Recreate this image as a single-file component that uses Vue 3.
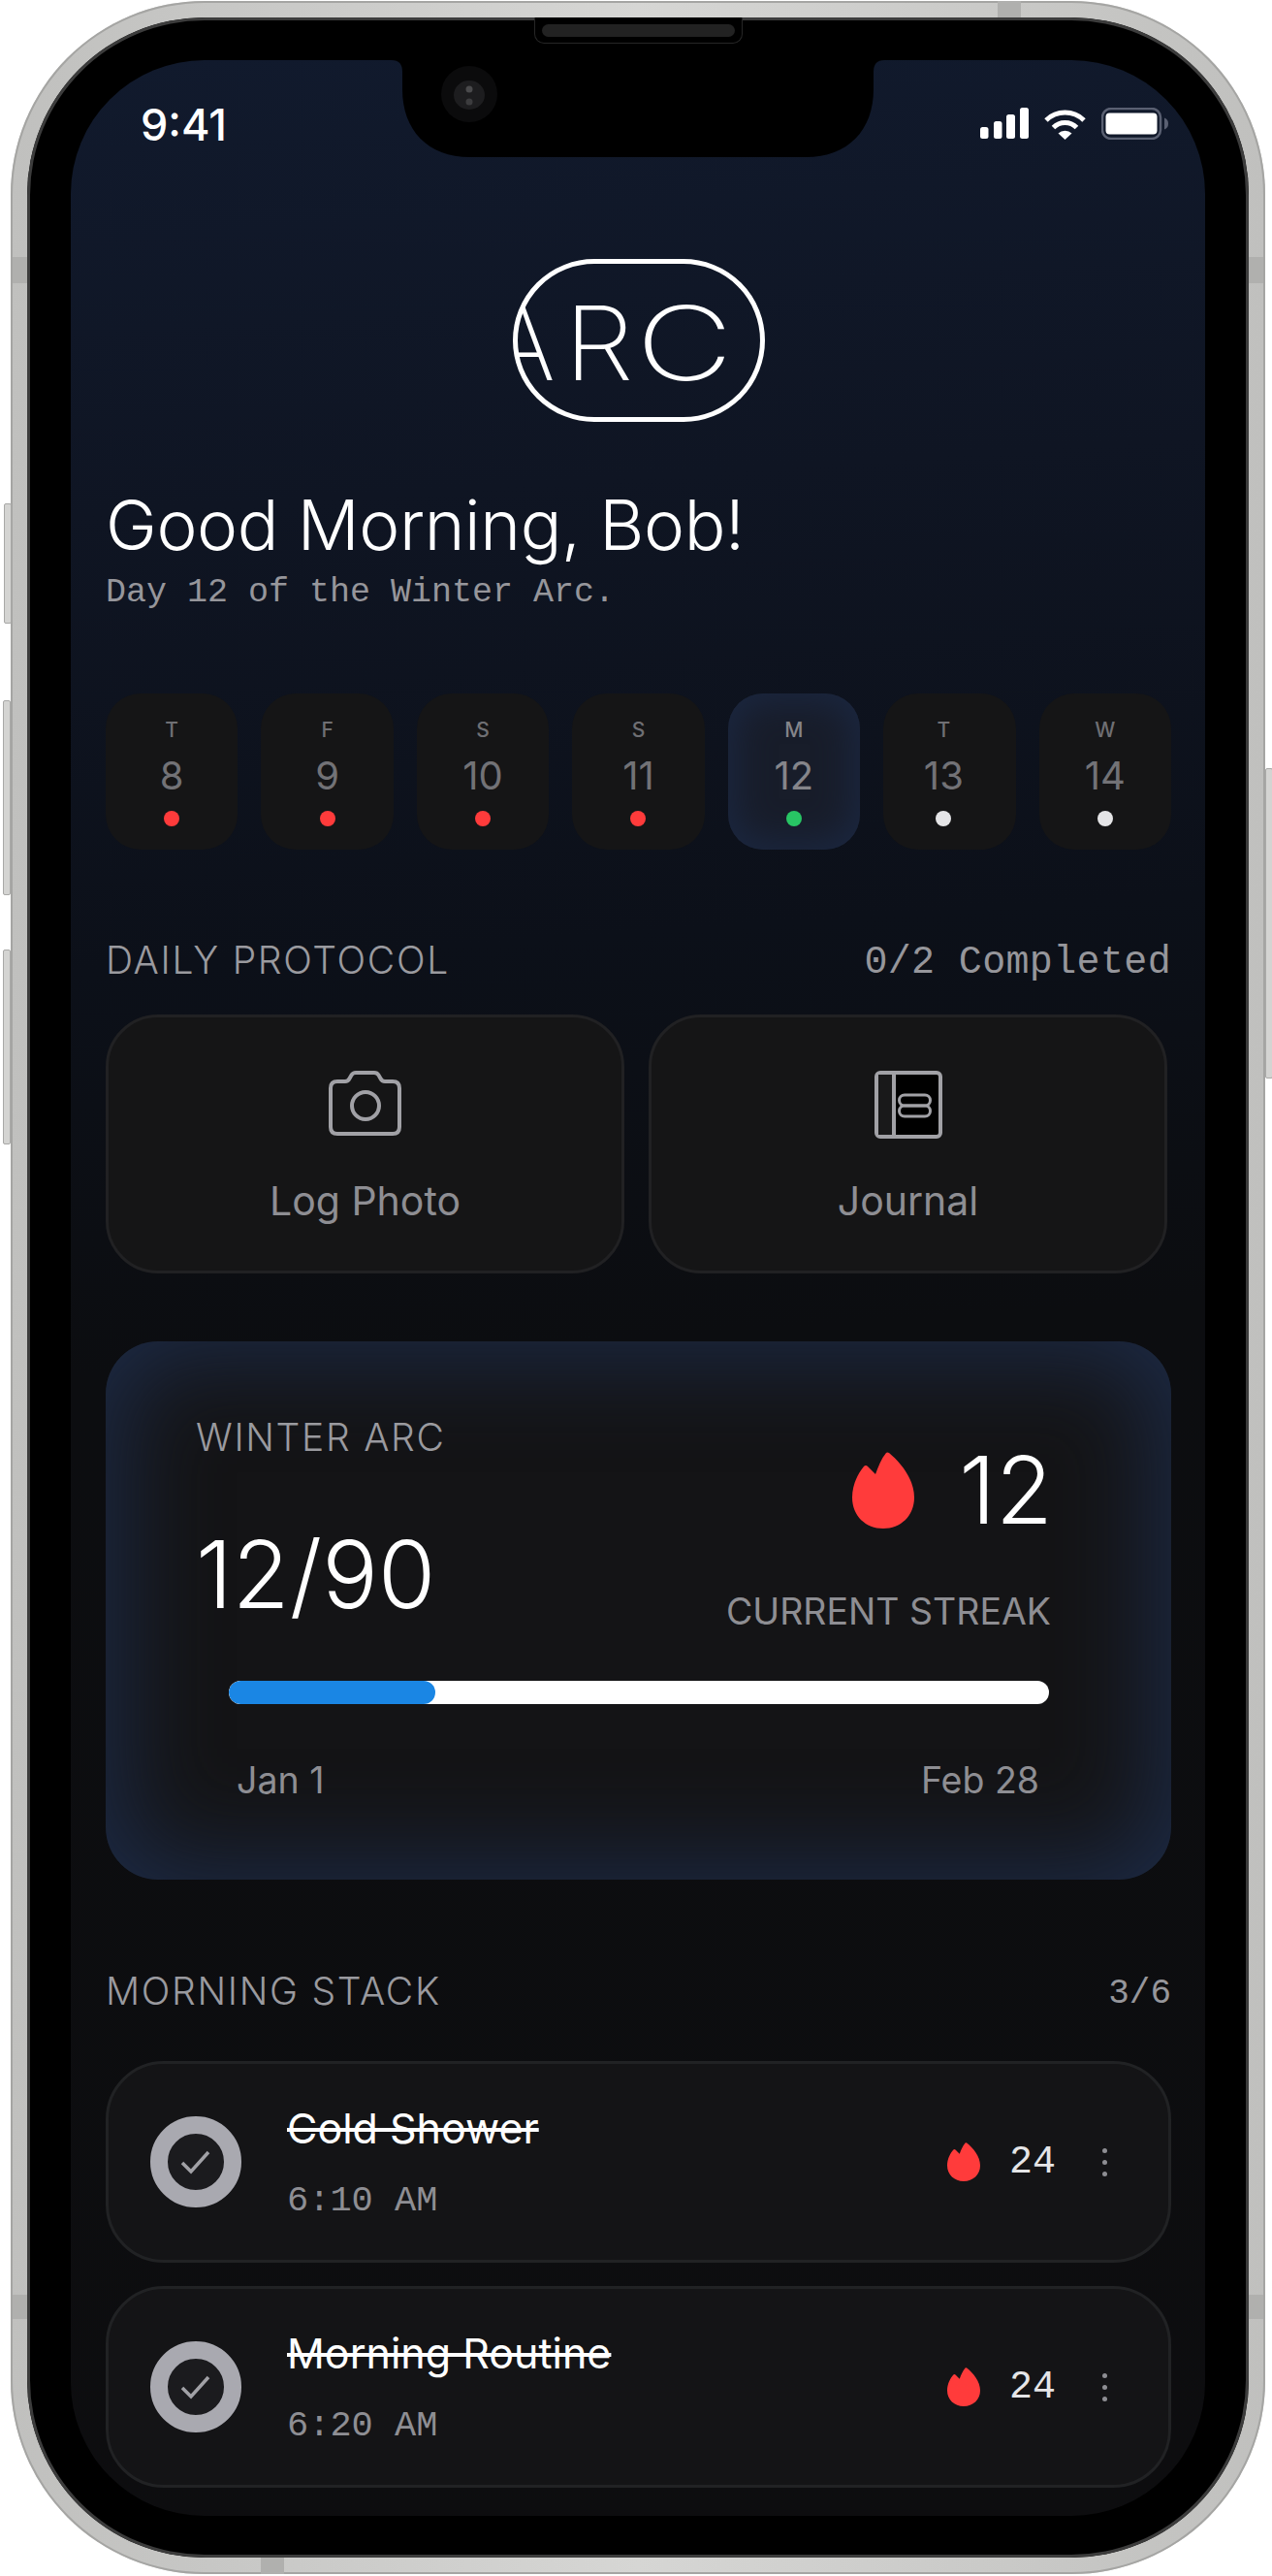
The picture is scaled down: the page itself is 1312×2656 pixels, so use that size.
<script setup>
const days = [
  { l: 'T', n: 8, s: 'miss' },
  { l: 'F', n: 9, s: 'miss' },
  { l: 'S', n: 10, s: 'miss' },
  { l: 'S', n: 11, s: 'miss' },
  { l: 'M', n: 12, s: 'now' },
  { l: 'T', n: 13, s: 'next off' },
  { l: 'W', n: 14, s: 'next' }
]
const tasks = [
  { t: 'Cold Shower', h: '6:10 AM', c: 24 },
  { t: 'Morning Routine', h: '6:20 AM', c: 24 }
]
const flame = 'M35 1Q36 0 38 1C50 11 64 28 64 47C64 66 50 79 32 79C14 79 0 66 0 47C0 34 6 22 12 15Q14 13 16 15L24 23C27 15 30 7 35 1Z'
</script>

<template>
  <div class="page">
    <div class="device">
      <i class="btn b1"></i><i class="btn b2"></i><i class="btn b3"></i><i class="btn b4"></i>
      <i class="ant a1"></i><i class="ant a2"></i><i class="ant a3"></i><i class="ant a4"></i><i class="ant a5"></i><i class="ant a6"></i>
      <div class="bezel">
        <div class="speaker"><span class="mesh"></span></div>
        <div class="screen">
          <svg class="notch" width="1170" height="100" viewBox="0 0 1170 100">
            <path d="M331 0Q342 0 342 12V30C342 72 368 100 412 100H758C802 100 828 72 828 30V12Q828 0 839 0Z" fill="#000" />
            <circle cx="411" cy="35" r="29" fill="#0b0b0c" />
            <ellipse cx="411" cy="36" rx="16" ry="15" fill="#1d1d1f" />
            <circle cx="411" cy="30" r="3.5" fill="#4a4a4c" />
            <circle cx="411" cy="43" r="3.5" fill="#3c3c3e" />
          </svg>

          <div class="status">
            <span class="clock">9:41</span>
            <div class="status-icons">
              <svg width="50" height="32" viewBox="0 0 50 32" fill="#fff">
                <rect x="0" y="20" width="8.5" height="12" rx="2.5" />
                <rect x="14" y="14" width="8.5" height="18" rx="2.5" />
                <rect x="27" y="7" width="9" height="25" rx="2.5" />
                <rect x="41" y="0" width="9" height="32" rx="2.5" />
              </svg>
              <svg width="45" height="33" viewBox="0 0 45 33" fill="none" stroke="#fff" stroke-width="5">
                <path d="M3 13A28 28 0 0 1 42 13" />
                <path d="M10.500 20.500A17 17 0 0 1 34.500 20.500" />
                <path d="M22.500 33L15.500 26.500A10 10 0 0 1 29.500 26.500Z" fill="#fff" stroke="none" />
              </svg>
              <svg width="69" height="33" viewBox="0 0 69 33">
                <rect x="1" y="1" width="60" height="31" rx="9" fill="none" stroke="#5a6072" stroke-width="2.500" />
                <rect x="4.500" y="5.500" width="53" height="22" rx="4" fill="#fff" />
                <path d="M65 10.500Q69 12 69 16.500Q69 21 65 22.500Z" fill="#5a6072" />
              </svg>
            </div>
          </div>

          <div class="content">
            <svg class="logo" width="260" height="168" viewBox="0 0 260 168">
              <defs>
                <clipPath id="pill"><rect x="2" y="2" width="256" height="164" rx="82" /></clipPath>
              </defs>
              <g clip-path="url(#pill)" class="logo-text">
                <text x="9" y="125" text-anchor="middle">A</text>
                <text transform="translate(53 125) scale(1.08 1)">R</text>
                <text transform="translate(127 125) scale(1.3 1)">C</text>
              </g>
              <rect x="2.500" y="2.500" width="255" height="163" rx="81.500" fill="none" stroke="#fff" stroke-width="5" />
            </svg>

            <h1 class="hello">Good Morning, Bob!</h1>
            <p class="sub mono">Day 12 of the Winter Arc.</p>

            <div class="days">
              <div v-for="d in days" :key="d.n" class="day" :class="d.s">
                <span class="d-l">{{ d.l }}</span>
                <span class="d-n">{{ d.n }}</span>
                <i class="d-dot"></i>
              </div>
            </div>

            <div class="head protocol">
              <span class="label">DAILY PROTOCOL</span>
              <span class="count mono">0/2 Completed</span>
            </div>

            <div class="actions">
              <div class="action">
                <div class="a-icon">
                  <svg width="75" height="67" viewBox="0 0 75 67" fill="none" stroke="#a1a1a6" stroke-width="4">
                    <path d="M9 11H17Q20 11 21.500 8L23.500 4.500Q25 2 28 2H47Q50 2 51.500 4.500L53.500 8Q55 11 58 11H66Q73 11 73 18V58Q73 65 66 65H9Q2 65 2 58V18Q2 11 9 11Z" />
                    <circle cx="38" cy="36" r="14" />
                  </svg>
                </div>
                <span class="a-text">Log Photo</span>
              </div>
              <div class="action">
                <div class="a-icon">
                  <svg width="70" height="70" viewBox="0 0 70 70">
                    <rect x="2" y="2" width="66" height="66" rx="4" fill="#000" stroke="#a1a1a6" stroke-width="4" />
                    <rect x="4" y="4" width="16" height="62" fill="#19191a" />
                    <path d="M20 2V68" stroke="#a1a1a6" stroke-width="4" />
                    <rect x="25.500" y="25" width="32" height="11" rx="5.500" fill="none" stroke="#a1a1a6" stroke-width="3" />
                    <rect x="25.500" y="36" width="32" height="11" rx="5.500" fill="none" stroke="#a1a1a6" stroke-width="3" />
                  </svg>
                </div>
                <span class="a-text">Journal</span>
              </div>
            </div>

            <section class="arc">
              <div class="arc-top">
                <div>
                  <div class="label">WINTER ARC</div>
                  <div class="big arc-count">12/90</div>
                </div>
                <div class="arc-right">
                  <div class="streak">
                    <svg width="64" height="79" viewBox="0 0 64 79"><path :d="flame" fill="#ff3b3b" /></svg>
                    <span class="big">12</span>
                  </div>
                  <div class="streak-label">CURRENT STREAK</div>
                </div>
              </div>
              <div class="bar"><div class="fill"></div></div>
              <div class="dates"><span>Jan 1</span><span>Feb 28</span></div>
            </section>

            <div class="head stack">
              <span class="label">MORNING STACK</span>
              <span class="count small mono">3/6</span>
            </div>

            <div class="tasks">
              <div v-for="t in tasks" :key="t.t" class="task">
                <div class="ring">
                  <svg width="58" height="58" viewBox="0 0 58 58" fill="none"><path d="M15 30L24 39L42 19" stroke="#a1a1a6" stroke-width="3.500" /></svg>
                </div>
                <div class="t-body">
                  <div class="t-title">{{ t.t }}</div>
                  <div class="t-time mono">{{ t.h }}</div>
                </div>
                <svg class="t-flame" width="34" height="40" viewBox="0 0 64 79" preserveAspectRatio="none"><path :d="flame" fill="#ff3b3b" /></svg>
                <span class="t-count mono">{{ t.c }}</span>
                <div class="t-more"><i></i><i></i><i></i></div>
              </div>
            </div>
          </div>
        </div>
      </div>
    </div>
  </div>
</template>

<style>
html, body { margin: 0; background: #fff; }
</style>

<style scoped>
.page { width: 1312px; height: 2656px; overflow: hidden; background: #fff; padding: 1px 0 0 11px; box-sizing: border-box; font-family: Inter, "Liberation Sans", sans-serif; }
.mono { font-family: "Liberation Mono", monospace; }
.device { position: relative; width: 1294px; height: 2653px; border-radius: 200px; background: linear-gradient(90deg, #c0c0be, #d6d6d4 50%, #c0c0be); box-shadow: inset 0 0 0 2px #a5a5a3; padding: 17px; box-sizing: border-box; }
.btn { position: absolute; width: 8px; background: #d4d4d2; border: 1px solid #a9a9a7; border-radius: 2px; box-sizing: border-box; }
.b1 { left: -7px; top: 518px; height: 124px; }
.b2 { left: -8px; top: 721px; height: 201px; }
.b3 { left: -8px; top: 978px; height: 201px; }
.b4 { left: 1294px; top: 791px; height: 320px; }
.ant { position: absolute; background: #b0b0ae; }
.a1 { left: 2px; top: 264px; width: 15px; height: 27px; }
.a2 { left: 1277px; top: 264px; width: 15px; height: 27px; }
.a3 { left: 1018px; top: 0; width: 24px; height: 17px; }
.a4 { left: 258px; top: 2636px; width: 24px; height: 17px; }
.a5 { left: 1277px; top: 2365px; width: 15px; height: 25px; }
.a6 { left: 2px; top: 2365px; width: 15px; height: 25px; }
.bezel { position: relative; width: 1260px; height: 2619px; border-radius: 183px; background: #000; box-shadow: inset 0 0 0 3px #3c3c3c; padding: 44px 0 0 45px; box-sizing: border-box; }
.speaker { position: absolute; left: 523px; top: 0; width: 215px; height: 27px; background: #000; border: 1px solid #262626; border-top: 0; border-radius: 0 0 10px 10px; box-sizing: border-box; padding: 7px 7px 0; }
.mesh { display: block; height: 13px; border-radius: 7px; background: #222; }
.screen { position: relative; width: 1170px; height: 2532px; border-radius: 138px; overflow: hidden; background: linear-gradient(176deg, #111a2d 0, #0f1523 18%, #0c1019 36%, #0c0d10 52%, #0d0d0f 100%); }
.notch { position: absolute; left: 0; top: 0; }
.status { height: 130px; display: flex; align-items: center; justify-content: space-between; padding: 0 38px 0 72px; }
.clock { font-size: 45px; font-weight: 500; color: #fff; position: relative; top: 1px; }
.status-icons { display: flex; align-items: center; gap: 15px; }
.content { padding: 0 35px 0 36px; }
.logo { display: block; margin: 75px auto 0; }
.logo-text { font-family: Inter, sans-serif; font-weight: 200; font-size: 106px; fill: #fff; }
.hello { margin: 62px 0 0; font-size: 71px; line-height: 88px; font-weight: 300; letter-spacing: -0.4px; color: #fff; }
.sub { margin: 5px 0 0; font-size: 35px; line-height: 42px; color: #96969b; }
.days { margin-top: 83px; display: grid; grid-template-columns: repeat(7, 1fr); gap: 24px; }
.day { height: 161px; border-radius: 36px; background: #151516; display: flex; flex-direction: column; align-items: center; box-sizing: border-box; padding-top: 24px; }
.day.off { padding-right: 12px; }
.day.now { background: #181d2a; box-shadow: inset 0 0 36px 8px #1b2740; }
.d-l { font-size: 21px; line-height: 28px; font-weight: 500; color: #6f6f73; }
.d-n { font-size: 40px; line-height: 48px; margin-top: 9px; color: #727276; }
.now .d-l, .now .d-n { color: #85858a; }
.d-dot { width: 16px; height: 16px; border-radius: 50%; margin-top: 12px; }
.miss .d-dot { background: #ff3b3b; }
.now .d-dot { background: #28c564; }
.next .d-dot { background: #e5e5e7; }
.head { display: flex; justify-content: space-between; align-items: center; height: 48px; }
.protocol { margin-top: 90px; }
.label { font-size: 39px; line-height: 48px; letter-spacing: 1.7px; font-weight: 350; color: #9a9a9f; }
.count { font-size: 40px; line-height: 48px; letter-spacing: 0.35px; color: #96969b; padding-top: 6px; }
.count.small { font-size: 36px; letter-spacing: 0; }
.actions { margin-top: 32px; display: grid; grid-template-columns: 535px 535px; gap: 25px; }
.action { height: 267px; box-sizing: border-box; background: #151516; border: 3px solid #212123; border-radius: 54px; display: flex; flex-direction: column; align-items: center; padding-top: 55px; }
.a-icon { height: 70px; }
.a-icon svg { display: block; }
.a-text { font-size: 41px; line-height: 48px; color: #8e8e93; margin-top: 40px; }
.arc { margin-top: 70px; height: 555px; box-sizing: border-box; border-radius: 54px; background: #141416; box-shadow: inset 0 0 100px 15px #1d2b47; padding: 75px 124px 0 93px; }
.arc-top { display: flex; justify-content: space-between; height: 228px; }
.big { font-size: 96px; line-height: 116px; font-weight: 300; color: #fff; }
.arc-count { margin-top: 59px; }
.arc-right { display: flex; flex-direction: column; align-items: flex-end; padding-top: 20px; }
.streak { display: flex; align-items: center; gap: 46px; margin-right: -2px; }
.streak-label { margin-top: 44px; font-size: 37.500px; line-height: 48px; color: #8e8e93; }
.bar { margin: 47px 2px 0 34px; height: 24px; border-radius: 12px; background: #fff; overflow: hidden; }
.fill { width: 213px; height: 24px; border-radius: 12px; background: #1a86e4; }
.dates { margin-top: 56px; padding: 0 12px 0 42px; display: flex; justify-content: space-between; font-size: 37.500px; line-height: 46px; color: #8e8e93; }
.stack { margin-top: 91px; }
.tasks { margin-top: 48px; display: flex; flex-direction: column; gap: 24px; }
.task { height: 208px; box-sizing: border-box; background: #141416; border: 3px solid #212224; border-radius: 60px; display: flex; align-items: center; padding: 0 63px 0 43px; }
.ring { width: 94px; height: 94px; border-radius: 50%; border: 18px solid #a9a9b0; background: #1b1b1e; box-sizing: border-box; flex: none; }
.ring svg { display: block; }
.t-body { margin-left: 47px; flex: 1; }
.t-title { font-size: 43px; line-height: 52px; color: #fff; text-decoration: line-through; }
.t-time { font-size: 37px; line-height: 44px; margin-top: 27px; color: #8e8e93; }
.t-flame { display: block; flex: none; }
.t-count { margin-left: 30px; font-size: 40px; color: #e5e5e7; }
.t-more { margin-left: 48px; display: flex; flex-direction: column; gap: 7px; }
.t-more i { display: block; width: 5px; height: 5px; border-radius: 50%; background: #8e8e93; }
</style>
